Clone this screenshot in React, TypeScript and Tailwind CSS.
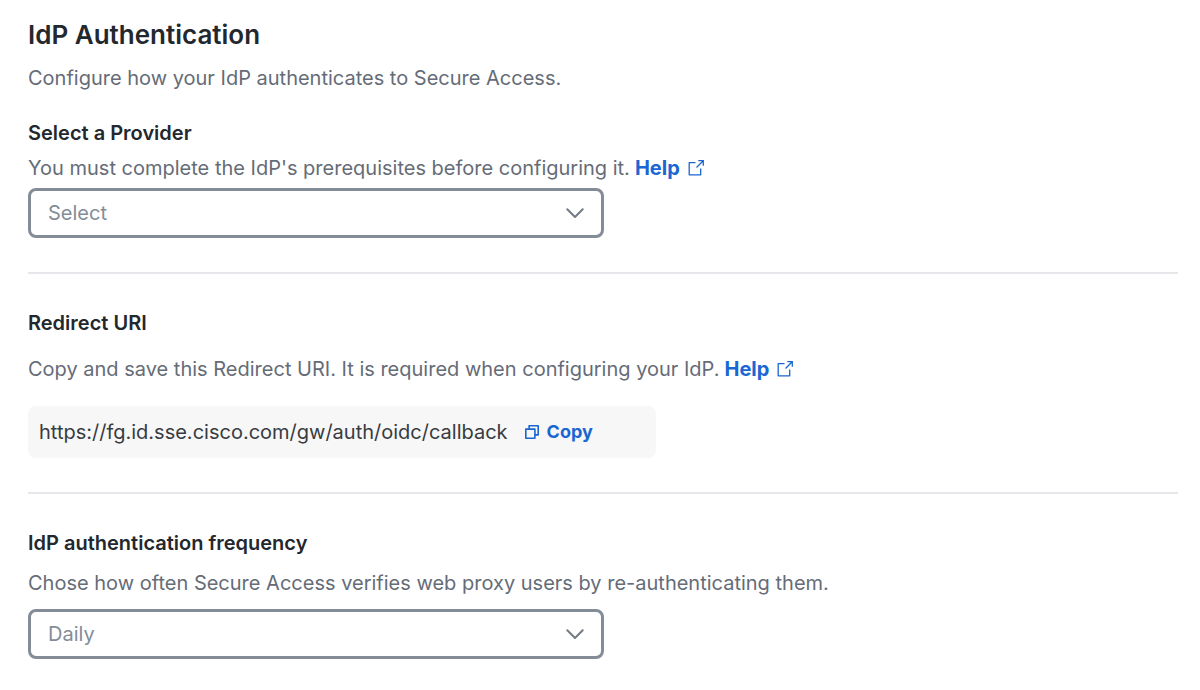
import { useState } from "react";

function ExternalIcon() {
  return (
    <svg viewBox="0 0 16 16" className="size-4 shrink-0" fill="none" stroke="currentColor" strokeWidth="1.3" aria-hidden="true">
      <path d="M7.500 2.700H1.200v12.100h11.500V8.500" strokeLinejoin="round" />
      <path d="M10.300 .7h5V5.700M15.200.8L8.500 7.500" />
    </svg>
  );
}

function HelpLink() {
  return (
    <a href="#help" className="ml-[5px] inline-flex items-center gap-2 font-bold text-[#1a66d2]">
      Help
      <ExternalIcon />
    </a>
  );
}

function SelectField({ id, options }: { id: string; options: string[] }) {
  return (
    <div className="relative w-full max-w-[576px]">
      <select
        id={id}
        className="block h-[50px] w-full appearance-none rounded-lg border-[3px] border-[#848d97] bg-white px-[17px] text-xl text-[#848d97]"
      >
        {options.map((option) => (
          <option key={option}>{option}</option>
        ))}
      </select>
      <svg
        viewBox="0 0 18 10"
        className="pointer-events-none absolute top-5 right-5 h-[10px] w-[18px] text-[#737b86]"
        fill="none"
        stroke="currentColor"
        strokeWidth="2"
        strokeLinecap="round"
        strokeLinejoin="round"
        aria-hidden="true"
      >
        <path d="M1.300 1.300L9 9l7.700-7.700" />
      </svg>
    </div>
  );
}

const REDIRECT_URI = "https://fg.id.sse.cisco.com/gw/auth/oidc/callback";

export default function App() {
  const [copied, setCopied] = useState(false);

  const handleCopy = async () => {
    await navigator.clipboard.writeText(REDIRECT_URI);
    setCopied(true);
  };

  return (
    <main className="bg-white pt-[17px] pr-[22px] pb-7 pl-7 font-['Inter',sans-serif] text-xl text-[#656c77]">
      <h1 className="text-[26px] leading-9 font-semibold text-[#23282e]">IdP Authentication</h1>
      <p className="mt-[11px]">Configure how your IdP authenticates to Secure Access.</p>

      <section className="mt-[27px] border-b-2 border-[#e6e7eb] pb-[34px]">
        <label htmlFor="provider" className="block font-semibold text-[#23282e]">
          Select a Provider
        </label>
        <p className="mt-[7px] mb-[6px]">
          You must complete the IdP's prerequisites before configuring it.
          <HelpLink />
        </p>
        <SelectField id="provider" options={["Select"]} />
      </section>

      <section className="mt-[35px] border-b-2 border-[#e6e7eb] pb-[34px]">
        <h2 className="font-semibold text-[#23282e]">Redirect URI</h2>
        <p className="mt-[18px]">
          Copy and save this Redirect URI. It is required when configuring your IdP.
          <HelpLink />
        </p>
        <div className="mt-[23px] flex h-[52px] w-full max-w-[628px] items-center rounded-lg bg-[#f7f7f7] px-[11px]">
          <span className="text-[#373c42]">{REDIRECT_URI}</span>
          <button
            type="button"
            title={copied ? "Copied" : undefined}
            onClick={() => void handleCopy()}
            className="ml-[17px] inline-flex items-center gap-2 text-lg font-bold text-[#1a66d2]"
          >
            <svg
              viewBox="0 0 14 14"
              className="size-[14px]"
              fill="none"
              stroke="currentColor"
              strokeWidth="1.6"
              strokeLinejoin="round"
              aria-hidden="true"
            >
              <path d="M.8 4.100h9.100v9.100H.8z" />
              <path d="M4.100 4.100V.8h9.100v9.100H9.900" />
            </svg>
            Copy
          </button>
        </div>
      </section>

      <section className="mt-[35px]">
        <label htmlFor="frequency" className="block font-semibold text-[#23282e]">
          IdP authentication frequency
        </label>
        <p className="mt-3 mb-3">Chose how often Secure Access verifies web proxy users by re-authenticating them.</p>
        <SelectField id="frequency" options={["Daily"]} />
      </section>
    </main>
  );
}
